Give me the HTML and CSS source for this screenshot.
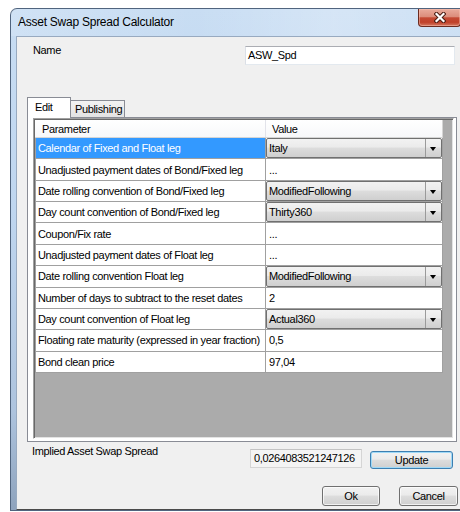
FILE: index.html
```html
<!DOCTYPE html>
<html>
<head>
<meta charset="utf-8">
<title>Asset Swap Spread Calculator</title>
<link rel="stylesheet" href="styles.css">
</head>
<body>
<div class="window">
  <div class="titlebar">
    <span class="title">Asset Swap Spread Calculator</span>
    <button class="close" aria-label="Close">
      <svg width="12" height="11" viewBox="0 0 12 11">
        <path d="M2.5 2 L9.5 9 M9.5 2 L2.5 9" stroke="#4a1d14" stroke-width="4.2" stroke-linecap="square" fill="none"/>
        <path d="M2.5 2 L9.5 9 M9.5 2 L2.5 9" stroke="#ffffff" stroke-width="2.2" stroke-linecap="square" fill="none"/>
      </svg>
    </button>
  </div>

  <div class="client">
    <div class="name-row">
      <label class="name-label">Name</label>
      <div class="textbox">ASW_Spd</div>
    </div>

    <div class="tabstrip">
      <div class="tab active">Edit</div>
      <div class="tab">Publishing</div>
    </div>

    <div class="tabpage">
      <div class="grid">
        <div class="rows">
          <div class="row head">
            <div class="cell param">Parameter</div>
            <div class="cell value">Value</div>
          </div>
          <div class="row">
            <div class="cell param selected">Calendar of Fixed and Float leg</div>
            <div class="cell value"><div class="combo"><span>Italy</span><i class="arrow"></i></div></div>
          </div>
          <div class="row">
            <div class="cell param">Unadjusted payment dates of Bond/Fixed leg</div>
            <div class="cell value text">...</div>
          </div>
          <div class="row">
            <div class="cell param">Date rolling convention of Bond/Fixed leg</div>
            <div class="cell value"><div class="combo"><span>ModifiedFollowing</span><i class="arrow"></i></div></div>
          </div>
          <div class="row">
            <div class="cell param">Day count convention of Bond/Fixed leg</div>
            <div class="cell value"><div class="combo"><span>Thirty360</span><i class="arrow"></i></div></div>
          </div>
          <div class="row">
            <div class="cell param">Coupon/Fix rate</div>
            <div class="cell value text">...</div>
          </div>
          <div class="row">
            <div class="cell param">Unadjusted payment dates of Float leg</div>
            <div class="cell value text">...</div>
          </div>
          <div class="row">
            <div class="cell param">Date rolling convention Float leg</div>
            <div class="cell value"><div class="combo"><span>ModifiedFollowing</span><i class="arrow"></i></div></div>
          </div>
          <div class="row">
            <div class="cell param">Number of days to subtract to the reset dates</div>
            <div class="cell value text">2</div>
          </div>
          <div class="row">
            <div class="cell param">Day count convention of Float leg</div>
            <div class="cell value"><div class="combo"><span>Actual360</span><i class="arrow"></i></div></div>
          </div>
          <div class="row">
            <div class="cell param">Floating rate maturity (expressed in year fraction)</div>
            <div class="cell value text">0,5</div>
          </div>
          <div class="row">
            <div class="cell param">Bond clean price</div>
            <div class="cell value text">97,04</div>
          </div>
        </div>
      </div>
    </div>

    <div class="result-row">
      <span class="result-label">Implied Asset Swap Spread</span>
      <div class="result-box">0,0264083521247126</div>
      <button class="btn btn-update">Update</button>
    </div>

    <div class="actions">
      <button class="btn btn-ok">Ok</button>
      <button class="btn btn-cancel">Cancel</button>
    </div>
  </div>
</div>
</body>
</html>
```

FILE: styles.css
```css
* {
  box-sizing: border-box;
}

html,
body {
  margin: 0;
}

html {
  overflow: hidden;
}

body {
  width: 460px;
  height: 512px;
  overflow: hidden;
  padding: 8px 0 0 10px;
  background: #ffffff;
  font-family: "Liberation Sans", Arial, sans-serif;
  font-size: 11px;
  letter-spacing: -0.35px;
  color: #000000;
}

/* Aero-basic window frame; its right edge runs past the viewport */
.window {
  width: 462px;
  height: 503px;
  display: flex;
  flex-direction: column;
  padding: 0 5px;
  border: 1px solid #50647e;
  border-right: none;
  border-radius: 7px 0 0 0;
  background: linear-gradient(to bottom, #c8ddf3 0%, #bfd6ef 40%, #aec4de 80%, #8ea3bd 100%);
}

.titlebar {
  height: 27px;
  flex: none;
  display: flex;
  justify-content: space-between;
  align-items: flex-start;
  background: linear-gradient(to right, rgba(255,255,255,0.15), rgba(255,255,255,0) 40%, rgba(255,255,255,0.25) 70%, rgba(255,255,255,0.1));
  margin: 0 -5px;
  padding: 0 5px;
}

.title {
  padding-left: 2px;
  line-height: 27px;
  font-size: 12px;
  letter-spacing: -0.25px;
  color: #000000;
}

.close {
  width: 43px;
  height: 18px;
  margin-right: 6px;
  padding: 0;
  display: flex;
  align-items: center;
  justify-content: center;
  border: 1px solid #6b2b20;
  border-top: none;
  border-radius: 0 0 4px 4px;
  background: linear-gradient(to bottom, #e9ab9c 0%, #dc8d7b 45%, #c44a34 52%, #c0412a 78%, #d47a63 100%);
  box-shadow: inset 0 0 0 1px rgba(255, 200, 185, 0.45);
}

/* Dialog client area */
.client {
  flex: 1;
  margin-right: -5px;
  background: #f0f0f0;
  border: 1px solid #98aac0;
  border-right: none;
  border-bottom-color: #4a4a4a;
}

.name-row {
  display: flex;
  margin: 7px 0 0 16px;
}

.name-label {
  width: 212px;
  line-height: 13px;
  height: 13px;
}

.textbox {
  width: 210px;
  height: 19px;
  margin-top: 2px;
  padding-left: 2px;
  line-height: 17px;
  background: #ffffff;
  border: 1px solid #e3e9ef;
  border-top-color: #abadb3;
  border-left-color: #dbdfe6;
}

/* Tabs */
.tabstrip {
  display: flex;
  align-items: flex-end;
  height: 20px;
  margin: 32px 0 0 10px;
}

.tab {
  height: 17px;
  padding: 2px 4px 0 4px;
  line-height: 13px;
  border: 1px solid #898c95;
  border-bottom: none;
  background: linear-gradient(to bottom, #f2f2f2, #e3e3e3);
}

.tab.active {
  position: relative;
  z-index: 1;
  width: 44px;
  height: 21px;
  margin-bottom: -1px;
  padding: 3px 0 0 7px;
  background: #ffffff;
}

.tab.active + .tab {
  width: 55px;
  margin-left: -1px;
}

.tabpage {
  width: 430px;
  height: 325px;
  margin-left: 10px;
  padding: 0 2px 2px 5px;
  background: #ffffff;
  border: 1px solid #898c95;
}

/* Property grid */
.grid {
  width: 421px;
  height: 321px;
  background: #ababab;
  border: 1px solid;
  border-color: #a0a0a0 #ffffff #ffffff #a0a0a0;
  box-shadow: inset 1px 1px 0 #696969, inset -1px -1px 0 #e3e3e3;
  padding: 1px 0 0 1px;
}

.rows {
  width: 408px;
}

.row {
  display: flex;
  height: 21.36px;
  border-bottom: 1px solid #a0a0a0;
  background: #ffffff;
}

.row.head {
  height: 18px;
  border-bottom: 1px solid #d5d5d5;
  background: linear-gradient(to bottom, #ffffff, #f7f8fa);
}

.cell {
  display: flex;
  align-items: center;
  white-space: nowrap;
  overflow: hidden;
}

.cell.param {
  width: 231px;
  padding-left: 2px;
  border-left: 1px solid #a0a0a0;
  border-right: 1px solid #a0a0a0;
}

.cell.value {
  width: 177px;
  border-right: 1px solid #a0a0a0;
}

.cell.value.text {
  padding-left: 3px;
}

.row.head .cell.param {
  padding-left: 7px;
  border-left: none;
  border-right-color: #e2e3ea;
}

.row.head .cell.value {
  padding-left: 6px;
  border-right-color: #d5d5d5;
}

.cell.selected {
  background: #3399ff;
  color: #ffffff;
}

.combo {
  width: 100%;
  height: 100%;
  display: flex;
  align-items: center;
  justify-content: space-between;
  padding-left: 2px;
  border: 1px solid #707070;
  border-radius: 2px;
  background: linear-gradient(to bottom, #f2f2f2 0%, #ebebeb 45%, #dddddd 50%, #cfcfcf 100%);
}

.arrow {
  width: 16px;
  height: 100%;
  flex: none;
  position: relative;
  border-left: 1px solid #9a9a9a;
}

.arrow::after {
  content: "";
  position: absolute;
  left: 4px;
  top: 50%;
  margin-top: -1px;
  border-left: 3.5px solid transparent;
  border-right: 3.5px solid transparent;
  border-top: 4px solid #000000;
}

/* Result and dialog buttons */
.result-row {
  display: flex;
  align-items: flex-start;
  margin-top: 7px;
}

.result-label {
  width: 218px;
  margin: -4px 0 0 15px;
  line-height: 13px;
}

.result-box {
  width: 112px;
  height: 19px;
  padding-left: 3px;
  line-height: 17px;
  background: #f4f4f4;
  border: 1px solid #d5d5d5;
  border-top-color: #c3c3c3;
}

.btn {
  padding: 0;
  font-family: inherit;
  font-size: 11px;
  letter-spacing: -0.35px;
  color: #000000;
  border: 1px solid #707070;
  border-radius: 3px;
  background: linear-gradient(to bottom, #f2f2f2 0%, #ebebeb 45%, #dddddd 50%, #cfcfcf 100%);
  box-shadow: inset 0 0 0 1px rgba(255, 255, 255, 0.7);
}

.btn-update {
  width: 83px;
  height: 18px;
  margin: 2px 0 0 8px;
  border-color: #3c7fb1;
  box-shadow: inset 0 0 0 1px #9fd9f7;
}

.actions {
  display: flex;
  margin: 17px 0 0 305px;
}

.btn-ok {
  width: 58px;
  height: 20px;
}

.btn-cancel {
  width: 59px;
  height: 20px;
  margin-left: 19px;
}
```
